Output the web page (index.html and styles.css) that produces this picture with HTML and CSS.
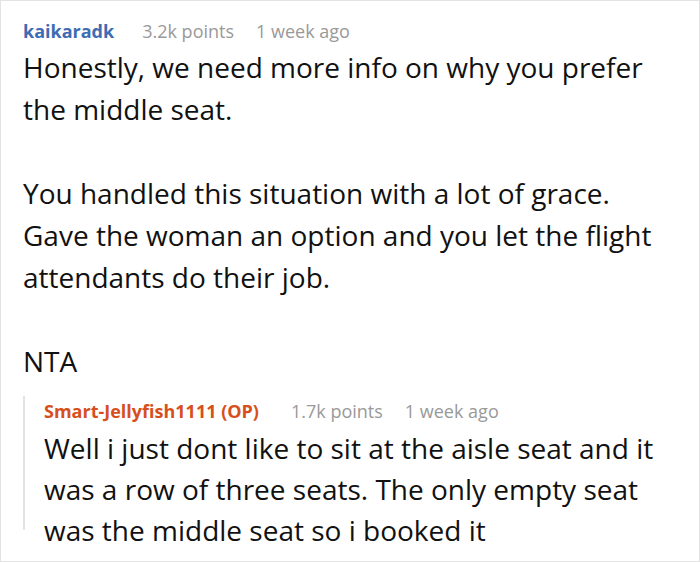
FILE: index.html
```html
<!DOCTYPE html>
<html>
<head>
<meta charset="utf-8">
<link rel="stylesheet" href="styles.css">
</head>
<body>
<div class="card">
  <div class="comment">
    <div class="meta"><span class="user">kaikaradk</span><span class="info">3.2k points</span><span class="info">1 week ago</span></div>
    <div class="body">
      <p>Honestly, we need more info on why you prefer the middle seat.</p>
      <p>You handled this situation with a lot of grace. Gave the woman an option and you let the flight attendants do their job.</p>
      <p>NTA</p>
    </div>
    <div class="reply">
      <div class="meta"><span class="user op">Smart-Jellyfish1111 (OP)</span><span class="info">1.7k points</span><span class="info">1 week ago</span></div>
      <div class="body">
        <p>Well i just dont like to sit at the aisle seat and it was a row of three seats. The only empty seat was the middle seat so i booked it</p>
      </div>
    </div>
  </div>
</div>
</body>
</html>
```

FILE: styles.css
```css
html, body {
  margin: 0;
  padding: 0;
  background: #fff;
}
body {
  font-family: "Open Sans", "Noto Sans", sans-serif;
  color: #111;
}
.card {
  width: 700px;
  height: 562px;
  box-sizing: border-box;
  border: 1px solid #e3e3e3;
  overflow: hidden;
}
.comment {
  padding: 15px 20px 0 22px;
}
.meta {
  font-size: 18px;
  line-height: 30px;
  display: flex;
  gap: 22px;
}
.user {
  font-weight: 700;
  color: #3d6cb4;
  margin-right: 6px;
}
.user.op {
  color: #d64f1c;
  margin-right: 10px;
}
.info {
  color: #999;
}
.body {
  font-size: 28px;
  line-height: 42px;
}
.body p {
  margin: 0 0 42px 0;
}
.body p:last-child {
  margin-bottom: 0;
}
.reply {
  margin-top: 27px;
  height: 134px;
  border-left: 2px solid #e3e3e3;
  padding-left: 19px;
}
.reply .meta {
  margin-top: -13px;
}
.reply .body {
  margin-top: 2px;
  line-height: 41px;
}
```
